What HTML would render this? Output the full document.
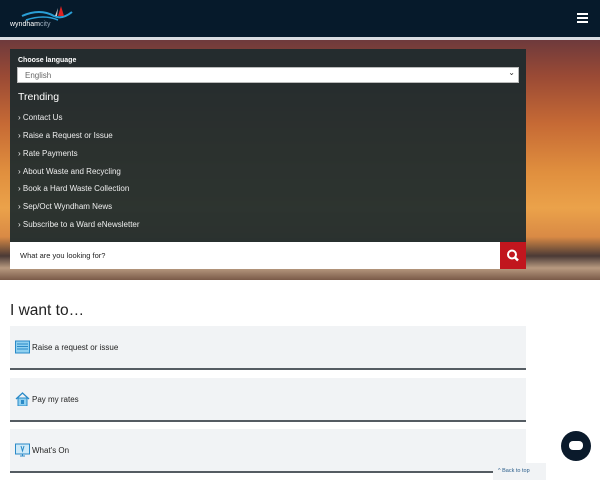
<!DOCTYPE html>
<html><head><style>
*{margin:0;padding:0;box-sizing:border-box}
body{width:600px;height:480px;overflow:hidden;font-family:"Liberation Sans",sans-serif;background:#fff;position:relative}
.hdr{position:absolute;left:0;top:0;width:600px;height:37px;background:#061a2b}
.line{position:absolute;top:37px;left:0;width:600px;height:3px;background:#d9dde2}
.hero{position:absolute;top:40px;left:0;width:600px;height:240px;background:linear-gradient(180deg,#6e3a3c 0%,#9a4a35 15%,#c66a35 35%,#e08f3e 55%,#eba24a 70%,#d98a45 82%,#4a3a36 90%,#b89a80 95%,#7a5a48 100%)}
.panel{position:absolute;left:10px;top:49px;width:516px;height:193px;background:rgba(28,42,46,.92)}
.lbl{position:absolute;left:18px;top:57px;color:#fff;font-size:7px;font-weight:bold}
.sel{position:absolute;left:17px;top:67px;width:502px;height:16px;background:#fff;border:1px solid #bbb;font-size:8px;color:#666;padding:3px 7px}
.sel:after{content:"⌄";position:absolute;right:3px;top:0;font-size:8px;color:#333}
.tr{position:absolute;left:18px;top:91px;color:#fff;font-size:10.5px}
.it{position:absolute;left:18px;color:#eee;font-size:8px}
.srch{position:absolute;left:10px;top:242px;width:490px;height:27px;background:#fff;font-size:7.5px;color:#222;padding:9px 10px}
.btn{position:absolute;left:500px;top:242px;width:26px;height:27px;background:#c1161e}
h1{position:absolute;left:10px;top:302px;font-size:15.5px;font-weight:normal;color:#222}
.card{position:absolute;left:10px;width:516px;height:44px;background:#f1f3f5;border-bottom:2px solid #555c62;font-size:8px;color:#222;padding:17px 0 0 22px}
.ic{position:absolute;left:5px;top:14px;width:15px;height:14px}
.chat{position:absolute;left:561px;top:431px;width:30px;height:30px;border-radius:50%;background:#0a1a2b}
.chat:after{content:"";position:absolute;left:8px;top:10px;width:14px;height:9px;background:#fff;border-radius:4px}
.btt{position:absolute;left:493px;top:463px;width:53px;height:17px;background:#f1f3f5;font-size:5.5px;color:#2a5d8a;padding:5px 0 0 5px}
</style></head><body>
<div class="hdr">
<svg style="position:absolute;left:10px;top:4px" width="64" height="24" viewBox="0 0 64 24"><path d="M12 12 Q30 4 44 12 Q52 16 62 8" stroke="#2a9fd6" stroke-width="2" fill="none"/><path d="M16 16 Q34 10 48 16" stroke="#2a9fd6" stroke-width="1.5" fill="none"/><path d="M51 2 L54 12 L48 12Z" fill="#d22"/><path d="M48 4 L47 12 L45 12Z" fill="#ccc"/><text x="0" y="22" font-size="7" fill="#fff" font-family="Liberation Sans">wyndham<tspan fill="#9ab">city</tspan></text></svg>
<div style="position:absolute;left:577px;top:13px;width:11px;height:2px;background:#fff;box-shadow:0 4px 0 #fff,0 8px 0 #fff"></div>
</div>
<div class="line"></div>
<div class="hero"></div>
<div class="panel"></div>
<div class="lbl">Choose language</div>
<div class="sel">English</div>
<div class="tr">Trending</div>
<div class="it" style="top:113px">›&nbsp;Contact Us</div>
<div class="it" style="top:131px">›&nbsp;Raise a Request or Issue</div>
<div class="it" style="top:149px">›&nbsp;Rate Payments</div>
<div class="it" style="top:167px">›&nbsp;About Waste and Recycling</div>
<div class="it" style="top:184px">›&nbsp;Book a Hard Waste Collection</div>
<div class="it" style="top:202px">›&nbsp;Sep/Oct Wyndham News</div>
<div class="it" style="top:220px">›&nbsp;Subscribe to a Ward eNewsletter</div>
<div class="srch">What are you looking for?</div>
<div class="btn"><svg width="26" height="27" viewBox="0 0 26 27"><circle cx="12" cy="12.5" r="4" stroke="#fff" stroke-width="2" fill="none"/><path d="M15 15.5 L18 18.5" stroke="#fff" stroke-width="2.5"/></svg></div>
<h1>I want to…</h1>
<div class="card" style="top:326px"><svg class="ic" viewBox="0 0 15 14"><rect x="0.5" y="1" width="14" height="12" fill="#8fd0f0" stroke="#2a8ac8"/><path d="M2 4h11M2 6.5h11M2 9h11" stroke="#2a8ac8"/></svg>Raise a request or issue</div>
<div class="card" style="top:378px"><svg class="ic" viewBox="0 0 15 14"><path d="M1 7 L7.5 1 L14 7" stroke="#2a8ac8" fill="none" stroke-width="1.3"/><rect x="3" y="6" width="9" height="8" fill="#8fd0f0" stroke="#2a8ac8"/><rect x="6" y="8" width="3" height="4" fill="#2a8ac8"/></svg>Pay my rates</div>
<div class="card" style="top:429px"><svg class="ic" viewBox="0 0 15 14"><rect x="0.5" y="1" width="14" height="10" fill="#cfeaf8" stroke="#2a8ac8"/><path d="M5 13h5M7.5 11v2" stroke="#2a8ac8"/><path d="M6 3l1.5 5 1.5-5" stroke="#2a8ac8" fill="none"/></svg>What's On</div>
<div class="chat"></div>
<div class="btt">^ Back to top</div>
</body></html>
